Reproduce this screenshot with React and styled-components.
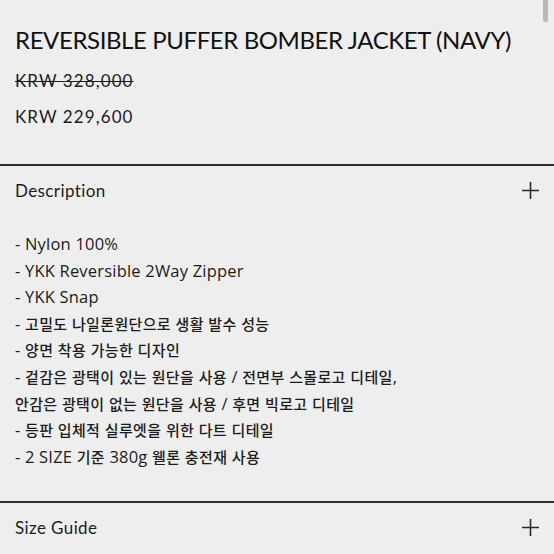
import React from "react";
import styled, { createGlobalStyle } from "styled-components";

const GlobalStyle = createGlobalStyle`
    html, body {
        margin: 0;
        padding: 0;
        background: #eeeeee;
    }
    body {
        font-family: "Lato", "Noto Sans CJK KR", sans-serif;
        color: #1a1a1a;
    }
`;

const Page = styled.div`
    position: relative;
    width: 554px;
    min-height: 554px;
    background: #eeeeee;
    overflow: hidden;
`;

const ScrollThumb = styled.div`
    position: absolute;
    top: 0;
    right: 6px;
    width: 5px;
    height: 22px;
    border-radius: 0 0 3px 3px;
    background: #b9b9b9;
`;

const ProductHead = styled.header`
    padding: 25px 15px 35px;
`;

const Title = styled.h1`
    margin: 0;
    font-size: 24px;
    line-height: 30px;
    font-weight: 400;
    color: #111;
    letter-spacing: -0.4px;
    white-space: nowrap;
`;

const Price = styled.p`
    margin: ${(props) => (props.old ? "14px 0 0" : "12px 0 0")};
    font-size: 17px;
    line-height: 24px;
    letter-spacing: 1.1px;
    color: #1c1c1c;
    text-decoration: ${(props) => (props.old ? "line-through" : "none")};
    text-decoration-thickness: 1px;
`;

const Section = styled.section`
    border-top: 2px solid #2e2e2e;
`;

const SectionHeader = styled.div`
    display: flex;
    align-items: center;
    justify-content: space-between;
    height: ${(props) => (props.last ? "49px" : "48px")};
    padding: 0 15px;
`;

const SectionTitle = styled.h2`
    margin: 0;
    font-size: 17px;
    font-weight: 400;
    letter-spacing: 0.4px;
    color: #1c1c1c;
`;

const PlusIcon = styled.svg`
    width: 17px;
    height: 17px;
    flex: none;
`;

const List = styled.ul`
    list-style: none;
    margin: 0;
    padding: 17px 15px 31px;
`;

const Item = styled.li`
    font-family: "Open Sans", "Noto Sans CJK KR", sans-serif;
    font-size: 16.5px;
    line-height: 26.6px;
    letter-spacing: 0.2px;
    color: #1c1c1c;
    white-space: nowrap;
`;

const Hangul = styled.span`
    font-family: "Noto Sans CJK KR", sans-serif;
    font-size: 15px;
    font-weight: 500;
    letter-spacing: 0.35px;
`;

const details = [
    "- Nylon 100%",
    "- YKK Reversible 2Way Zipper",
    "- YKK Snap",
    "- 고밀도 나일론원단으로 생활 발수 성능",
    "- 양면 착용 가능한 디자인",
    "- 겉감은 광택이 있는 원단을 사용 / 전면부 스몰로고 디테일,",
    "안감은 광택이 없는 원단을 사용 / 후면 빅로고 디테일",
    "- 등판 입체적 실루엣을 위한 다트 디테일",
    "- 2 SIZE 기준 380g 웰론 충전재 사용",
];

function Line({ text }) {
    const parts = text.split(/([\uAC00-\uD7A3]+)/);
    return parts.map((part, i) =>
        i % 2 === 1 ? <Hangul key={i}>{part}</Hangul> : part
    );
}

function Plus() {
    return (
        <PlusIcon viewBox="0 0 17 17">
            <path d="M8.5 0v17M0 8.5h17" stroke="#2a2a2a" strokeWidth="1.6" fill="none" />
        </PlusIcon>
    );
}

export default function App() {
    return (
        <Page>
            <GlobalStyle />
            <ScrollThumb />
            <ProductHead>
                <Title>REVERSIBLE PUFFER BOMBER JACKET (NAVY)</Title>
                <Price old>KRW 328,000</Price>
                <Price>KRW 229,600</Price>
            </ProductHead>
            <Section>
                <SectionHeader>
                    <SectionTitle>Description</SectionTitle>
                    <Plus />
                </SectionHeader>
                <List>
                    {details.map((line, index) => (
                        <Item key={index}>
                            <Line text={line} />
                        </Item>
                    ))}
                </List>
            </Section>
            <Section>
                <SectionHeader last>
                    <SectionTitle>Size Guide</SectionTitle>
                    <Plus />
                </SectionHeader>
            </Section>
        </Page>
    );
}
